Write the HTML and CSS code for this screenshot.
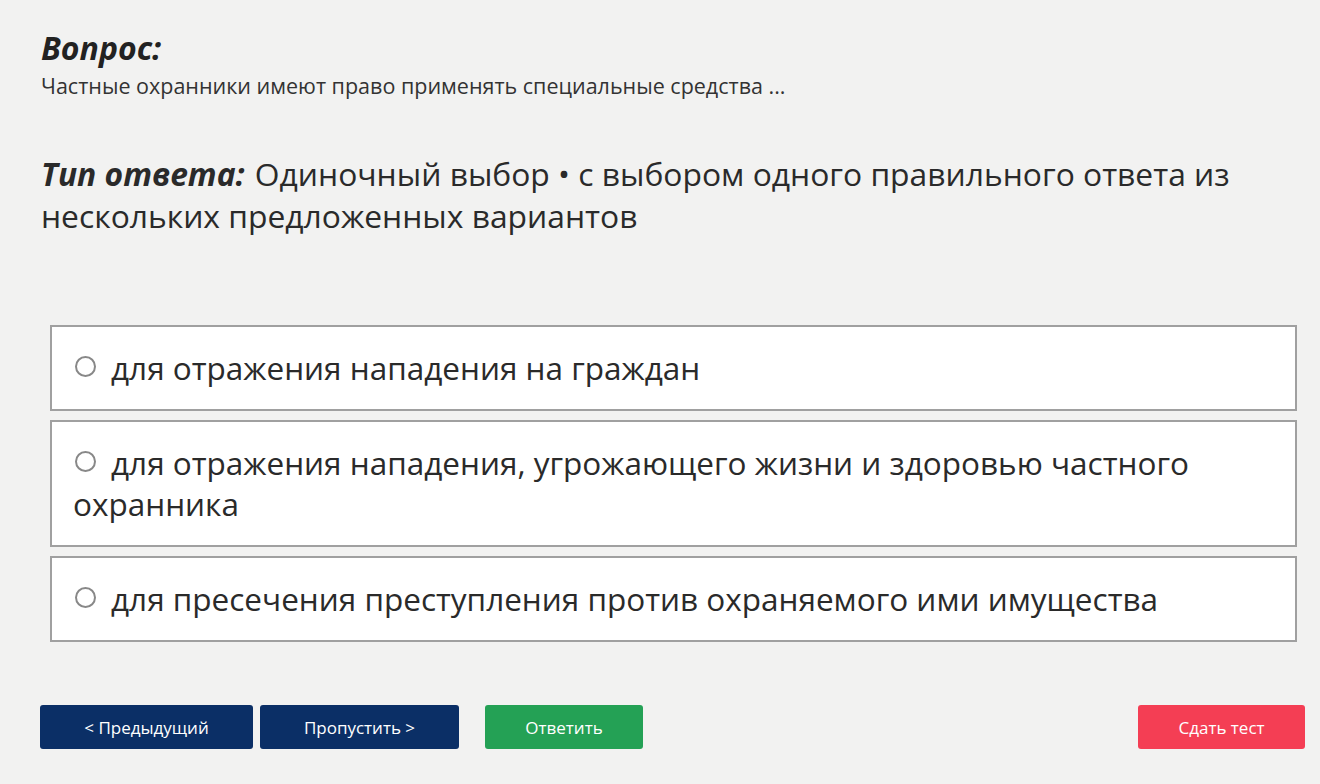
FILE: index.html
```html
<!DOCTYPE html>
<html lang="ru">
<head>
  <meta charset="UTF-8">
  <title>Вопрос</title>
  <link rel="stylesheet" href="styles.css">
</head>
<body>
  <div class="page">
    <!-- Вопрос -->
    <div class="question">
      <div class="q-title">Вопрос:</div>
      <div class="q-text">Частные охранники имеют право применять специальные средства ...</div>
    </div>
    <!-- Тип ответа -->
    <div class="answer-type">
      <span class="label">Тип ответа:</span> Одиночный выбор • с выбором одного правильного ответа из нескольких предложенных вариантов
    </div>
    <!-- Варианты -->
    <div class="options">
      <label class="option"><span class="radio"></span>для отражения нападения на граждан</label>
      <label class="option"><span class="radio"></span>для отражения нападения, угрожающего жизни и здоровью частного охранника</label>
      <label class="option"><span class="radio"></span>для пресечения преступления против охраняемого ими имущества</label>
    </div>
    <!-- Кнопки -->
    <div class="actions">
      <button class="btn btn-nav">&lt; Предыдущий</button>
      <button class="btn btn-nav btn-skip">Пропустить &gt;</button>
      <button class="btn btn-answer">Ответить</button>
      <button class="btn btn-finish">Сдать тест</button>
    </div>
  </div>
</body>
</html>
```

FILE: styles.css
```css
body {
  margin: 0;
  background: #f2f2f1;
  color: #222;
  font-family: "Open Sans", Arial, sans-serif;
}
.page {
  padding: 28px 15px 0 41px;
}
.q-title {
  font-size: 32px;
  font-weight: bold;
  font-style: italic;
  line-height: 40px;
}
.q-text {
  margin-top: 4px;
  font-size: 21.5px;
  line-height: 28px;
  color: #333;
}
.answer-type {
  margin-top: 53px;
  font-size: 31.8px;
  line-height: 42px;
  color: #2a2a2a;
  padding-right: 60px;
}
.answer-type .label {
  font-weight: bold;
  font-style: italic;
  margin-right: 2px;
}
.options {
  margin-top: 88px;
  margin-left: 9px;
  margin-right: 8px;
  display: flex;
  flex-direction: column;
  gap: 9px;
}
.option {
  display: block;
  background: #fff;
  border: 2px solid #a0a0a0;
  padding: 20px 20px 21px 21px;
  font-size: 31.5px;
  line-height: 41px;
  color: #2a2a2a;
}
.radio {
  display: inline-block;
  width: 17px;
  height: 17px;
  border: 2px solid #888;
  border-radius: 50%;
  margin: 0 15px 0 2px;
  vertical-align: 3px;
}
.actions {
  margin-top: 63px;
  margin-left: -1px;
  display: flex;
  align-items: center;
}
.btn {
  height: 44px;
  border: none;
  border-radius: 3px;
  color: #fff;
  font-family: "Open Sans", Arial, sans-serif;
  font-size: 17px;
  cursor: pointer;
}
.btn-nav {
  background: #0b2f66;
  width: 213px;
}
.btn-skip {
  width: 199px;
  margin-left: 7px;
}
.btn-answer {
  background: #24a155;
  width: 158px;
  margin-left: 26px;
}
.btn-finish {
  background: #f43e54;
  width: 167px;
  margin-left: auto;
}
```
